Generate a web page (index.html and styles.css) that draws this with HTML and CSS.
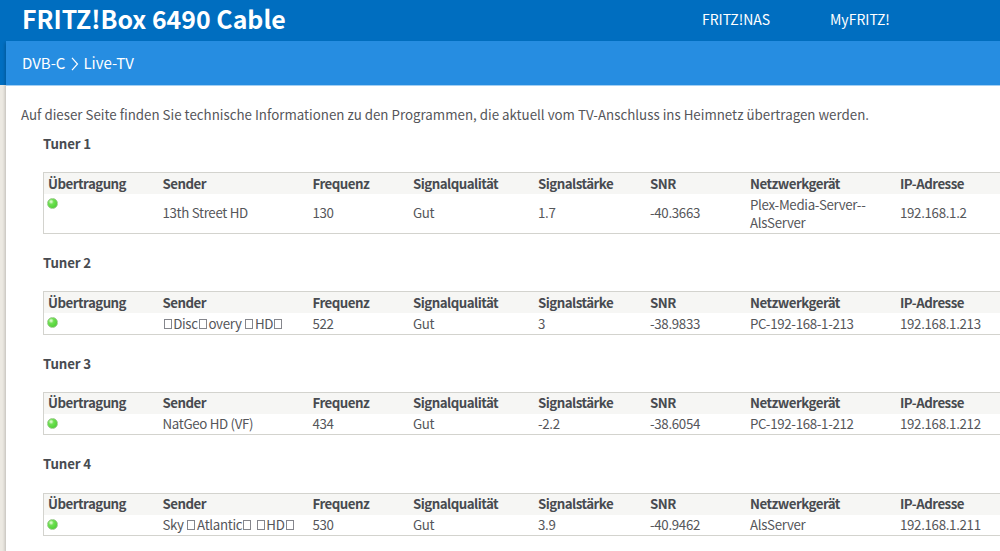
FILE: index.html
```html
<!DOCTYPE html>
<html lang="de">
<head>
  <meta charset="UTF-8">
  <meta name="viewport" content="width=device-width, initial-scale=1.0">
  <title>FRITZ!Box 6490 Cable</title>
  <link rel="stylesheet" href="styles.css">
</head>
<body>

  <header class="header">
    <h1>FRITZ!Box 6490 Cable</h1>
    <nav class="top-nav">
      <a class="nas">FRITZ!NAS</a>
      <a class="myfritz">MyFRITZ!</a>
    </nav>
  </header>

  <div class="page">
    <div class="breadcrumb">
      <span class="crumb">DVB-C</span>
      <svg class="arrow" width="8" height="14" viewBox="0 0 8 14"><path d="M1 .8 6.5 7 1 13.2" fill="none" stroke="#fff" stroke-width="1.2"/></svg>
      <span class="crumb">Live-TV</span>
    </div>

    <main class="content">
      <p class="intro">Auf dieser Seite finden Sie technische Informationen zu den Programmen, die aktuell vom TV-Anschluss ins Heimnetz übertragen werden.</p>

      <h2>Tuner 1</h2>
      <div class="tuner tall">
        <div class="row head">
          <span>Übertragung</span><span>Sender</span><span>Frequenz</span><span>Signalqualität</span><span>Signalstärke</span><span>SNR</span><span>Netzwerkgerät</span><span>IP-Adresse</span>
        </div>
        <div class="row">
          <span class="status"><i class="led"></i></span><span>13th Street HD</span><span>130</span><span>Gut</span><span>1.7</span><span>-40.3663</span><span class="device">Plex-Media-Server--<br>AlsServer</span><span>192.168.1.2</span>
        </div>
      </div>

      <h2>Tuner 2</h2>
      <div class="tuner">
        <div class="row head">
          <span>Übertragung</span><span>Sender</span><span>Frequenz</span><span>Signalqualität</span><span>Signalstärke</span><span>SNR</span><span>Netzwerkgerät</span><span>IP-Adresse</span>
        </div>
        <div class="row">
          <span class="status"><i class="led"></i></span><span><i class="box"></i>Disc<i class="box"></i>overy <i class="box"></i>HD<i class="box"></i></span><span>522</span><span>Gut</span><span>3</span><span>-38.9833</span><span>PC-192-168-1-213</span><span>192.168.1.213</span>
        </div>
      </div>

      <h2>Tuner 3</h2>
      <div class="tuner">
        <div class="row head">
          <span>Übertragung</span><span>Sender</span><span>Frequenz</span><span>Signalqualität</span><span>Signalstärke</span><span>SNR</span><span>Netzwerkgerät</span><span>IP-Adresse</span>
        </div>
        <div class="row">
          <span class="status"><i class="led"></i></span><span>NatGeo HD (VF)</span><span>434</span><span>Gut</span><span>-2.2</span><span>-38.6054</span><span>PC-192-168-1-212</span><span>192.168.1.212</span>
        </div>
      </div>

      <h2 class="last">Tuner 4</h2>
      <div class="tuner">
        <div class="row head">
          <span>Übertragung</span><span>Sender</span><span>Frequenz</span><span>Signalqualität</span><span>Signalstärke</span><span>SNR</span><span>Netzwerkgerät</span><span>IP-Adresse</span>
        </div>
        <div class="row">
          <span class="status"><i class="led"></i></span><span>Sky <i class="box"></i>Atlantic<i class="box"></i> <i class="box"></i>HD<i class="box"></i></span><span>530</span><span>Gut</span><span>3.9</span><span>-40.9462</span><span>AlsServer</span><span>192.168.1.211</span>
        </div>
      </div>
    </main>
  </div>

</body>
</html>
```
FILE: styles.css
```css
* {
  box-sizing: border-box;
}

body {
  margin: 0;
  height: 551px;
  overflow: hidden;
  background: linear-gradient(#006ec0 85px, #ece9e2 85px);
  font-family: "Noto Sans CJK SC", "Noto Sans", sans-serif;
  font-size: 13.3px;
  color: #55565a;
}

.header {
  display: flex;
  height: 41px;
  padding-left: 22px;
  color: #fff;
}

h1 {
  width: 680px;
  margin: 0;
  font-size: 24.9px;
  font-weight: 700;
  line-height: 36px;
}

.top-nav {
  display: flex;
  font-size: 14px;
  line-height: 39px;
}

.nas {
  width: 128px;
}

.page {
  height: 510px;
  margin-left: 6px;
  background: #fff;
  box-shadow: -1px 2px 3px rgba(0, 0, 0, 0.2);
}

.breadcrumb {
  display: flex;
  align-items: center;
  height: 45px;
  padding-left: 16px;
  background: #268de1;
  border-bottom: 1px solid #a3cff3;
  color: #fff;
  font-size: 15px;
  line-height: 44px;
}

.arrow {
  margin: 2px 4px 0 6px;
}

.content {
  padding: 19px 0 0 37px;
}

.intro {
  margin: 0 0 0 -22px;
  line-height: 20px;
  font-size: 13.34px;
  white-space: nowrap;
}

h2 {
  height: 57px;
  margin: 0;
  padding-top: 19px;
  font-size: 13.3px;
  font-weight: 700;
  line-height: 20px;
  letter-spacing: -0.15px;
  color: #484b50;
}

h2.last {
  height: 57.5px;
}

.intro + h2 {
  height: 47px;
  padding-top: 9px;
}

.tuner {
  height: 43.5px;
  border: 1px solid #d3d3ce;
  border-right: none;
}

.tuner.tall {
  height: 62px;
}

.row {
  display: grid;
  grid-template-columns: 114.5px 150px 100.5px 125px 112px 100px 150px 1fr;
  align-items: center;
  height: 21px;
  padding-left: 4px;
  line-height: 18px;
  letter-spacing: -0.32px;
  white-space: nowrap;
}

.tall .row:last-child {
  height: 38px;
}

.device {
  padding-top: 1px;
}

.row.head {
  background: #f6f6f4;
  font-weight: 700;
  letter-spacing: -0.52px;
  color: #484b50;
}

.status {
  align-self: start;
  padding-top: 4px;
}

.led {
  display: block;
  width: 11px;
  height: 11px;
  margin-left: -1px;
  border: 1px solid #9bcb8b;
  border-radius: 50%;
  background: radial-gradient(circle at 35% 30%, #d3f8c4 0 8%, #6fe052 30%, #57d63c 65%, #4fb23c);
}

/* missing glyph placeholder */
.box {
  display: inline-block;
  width: 8px;
  height: 10px;
  margin: 0 1.7px 0 1px;
  border: 1px solid #85868c;
}
```
